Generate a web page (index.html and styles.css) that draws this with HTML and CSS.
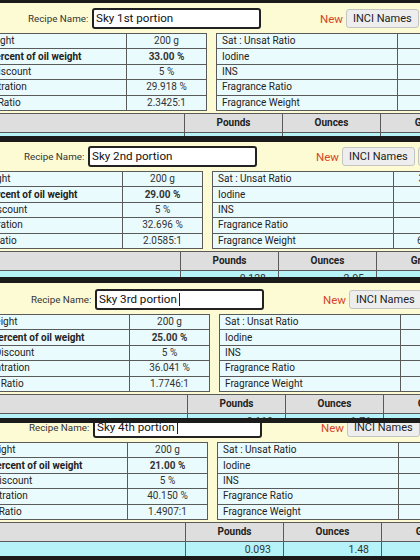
FILE: index.html
```html
<!DOCTYPE html>
<html lang="en">
<head>
  <meta charset="UTF-8">
  <meta name="viewport" content="width=device-width, initial-scale=1.0">
  <title>Soap Recipe Portions</title>
  <link rel="stylesheet" href="styles.css">
</head>
<body>

<!-- portion 1 -->
<div class="shot shot-1">
  <div class="sheet">
    <div class="recipe-bar">
      <span class="recipe-label">Recipe Name:</span>
      <div class="name-box">Sky 1st portion</div>
      <span class="new-link">New</span>
      <button class="bar-button">INCI Names</button>
      <button class="bar-button">Edit</button>
    </div>
    <div class="tables">
      <table class="grid grid-left">
        <tr><td>Total oil weight</td><td class="val">200 g</td></tr>
        <tr class="strong"><td>Water as Percent of oil weight</td><td class="val">33.00 %</td></tr>
        <tr><td>Super Fat Discount</td><td class="val">5 %</td></tr>
        <tr><td>Lye Concentration</td><td class="val">29.918 %</td></tr>
        <tr><td>Water : Lye Ratio</td><td class="val">2.3425:1</td></tr>
      </table>
      <table class="grid grid-right">
        <tr><td>Sat : Unsat Ratio</td><td class="val">35 : 65</td></tr>
        <tr><td>Iodine</td><td class="val">63</td></tr>
        <tr><td>INS</td><td class="val">141</td></tr>
        <tr><td>Fragrance Ratio</td><td class="val">3 %</td></tr>
        <tr><td>Fragrance Weight</td><td class="val">6.000 g</td></tr>
      </table>
    </div>
    <table class="amounts">
      <tr><th></th><th>Pounds</th><th>Ounces</th><th>Grams</th></tr>
      <tr><td></td><td>0.146</td><td>2.33</td><td>66.00</td></tr>
    </table>
  </div>
</div>

<!-- portion 2 -->
<div class="shot shot-2">
  <div class="sheet">
    <div class="recipe-bar">
      <span class="recipe-label">Recipe Name:</span>
      <div class="name-box">Sky 2nd portion</div>
      <span class="new-link">New</span>
      <button class="bar-button">INCI Names</button>
      <button class="bar-button">Edit</button>
    </div>
    <div class="tables">
      <table class="grid grid-left">
        <tr><td>Total oil weight</td><td class="val">200 g</td></tr>
        <tr class="strong"><td>Water as Percent of oil weight</td><td class="val">29.00 %</td></tr>
        <tr><td>Super Fat Discount</td><td class="val">5 %</td></tr>
        <tr><td>Lye Concentration</td><td class="val">32.696 %</td></tr>
        <tr><td>Water : Lye Ratio</td><td class="val">2.0585:1</td></tr>
      </table>
      <table class="grid grid-right">
        <tr><td>Sat : Unsat Ratio</td><td class="val">35 : 65</td></tr>
        <tr><td>Iodine</td><td class="val">63</td></tr>
        <tr><td>INS</td><td class="val">141</td></tr>
        <tr><td>Fragrance Ratio</td><td class="val">3 %</td></tr>
        <tr><td>Fragrance Weight</td><td class="val">6.000 g</td></tr>
      </table>
    </div>
    <table class="amounts">
      <tr><th></th><th>Pounds</th><th>Ounces</th><th>Grams</th></tr>
      <tr><td></td><td>0.128</td><td>2.05</td><td>58.00</td></tr>
    </table>
  </div>
</div>

<!-- portion 3 -->
<div class="shot shot-3">
  <div class="sheet">
    <div class="recipe-bar">
      <span class="recipe-label">Recipe Name:</span>
      <div class="name-box">Sky 3rd portion<span class="caret"></span></div>
      <span class="new-link">New</span>
      <button class="bar-button">INCI Names</button>
      <button class="bar-button">Edit</button>
    </div>
    <div class="tables">
      <table class="grid grid-left">
        <tr><td>Total oil weight</td><td class="val">200 g</td></tr>
        <tr class="strong"><td>Water as Percent of oil weight</td><td class="val">25.00 %</td></tr>
        <tr><td>Super Fat Discount</td><td class="val">5 %</td></tr>
        <tr><td>Lye Concentration</td><td class="val">36.041 %</td></tr>
        <tr><td>Water : Lye Ratio</td><td class="val">1.7746:1</td></tr>
      </table>
      <table class="grid grid-right">
        <tr><td>Sat : Unsat Ratio</td><td class="val">35 : 65</td></tr>
        <tr><td>Iodine</td><td class="val">63</td></tr>
        <tr><td>INS</td><td class="val">141</td></tr>
        <tr><td>Fragrance Ratio</td><td class="val">3 %</td></tr>
        <tr><td>Fragrance Weight</td><td class="val">6.000 g</td></tr>
      </table>
    </div>
    <table class="amounts">
      <tr><th></th><th>Pounds</th><th>Ounces</th><th>Grams</th></tr>
      <tr><td></td><td>0.110</td><td>1.76</td><td>50.00</td></tr>
    </table>
  </div>
</div>

<!-- portion 4 -->
<div class="shot shot-4">
  <div class="sheet">
    <div class="recipe-bar">
      <span class="recipe-label">Recipe Name:</span>
      <div class="name-box">Sky 4th portion<span class="caret"></span></div>
      <span class="new-link">New</span>
      <button class="bar-button">INCI Names</button>
      <button class="bar-button">Edit</button>
    </div>
    <div class="tables">
      <table class="grid grid-left">
        <tr><td>Total oil weight</td><td class="val">200 g</td></tr>
        <tr class="strong"><td>Water as Percent of oil weight</td><td class="val">21.00 %</td></tr>
        <tr><td>Super Fat Discount</td><td class="val">5 %</td></tr>
        <tr><td>Lye Concentration</td><td class="val">40.150 %</td></tr>
        <tr><td>Water : Lye Ratio</td><td class="val">1.4907:1</td></tr>
      </table>
      <table class="grid grid-right">
        <tr><td>Sat : Unsat Ratio</td><td class="val">35 : 65</td></tr>
        <tr><td>Iodine</td><td class="val">63</td></tr>
        <tr><td>INS</td><td class="val">141</td></tr>
        <tr><td>Fragrance Ratio</td><td class="val">3 %</td></tr>
        <tr><td>Fragrance Weight</td><td class="val">6.000 g</td></tr>
      </table>
    </div>
    <table class="amounts">
      <tr><th></th><th>Pounds</th><th>Ounces</th><th>Grams</th></tr>
      <tr><td></td><td>0.093</td><td>1.48</td><td>42.00</td></tr>
    </table>
  </div>
</div>

</body>
</html>
```

FILE: styles.css
```css
body {
  margin: 0;
  background-color: #1b1b1b;
  font-family: Roboto, "Noto Sans", sans-serif;
  color: #222;
}

/* one cropped screen per portion, dark band between them */
.shot {
  overflow: hidden;
  background-color: #fdfbd3;
  border-bottom: 5px solid #1b1b1b;
}

.shot-1 { height: 133px; border-top: 3px solid #1b1b1b; border-bottom-width: 6px; }
.shot-2 { height: 135px; border-bottom-width: 6px; }
.shot-3 { height: 135px; border-bottom-width: 5px; }
.shot-4 { height: 133px; border-bottom-width: 4px; }

/* the sheet is wider than the screen, scrolled a bit to the right */
.sheet {
  width: 560px;
  padding-top: 5px;
  margin-left: -60px;
}

.shot-2 .sheet { margin: -1px 0 0 -64px; }
.shot-3 .sheet { margin: 1px 0 0 -57px; }
.shot-4 .sheet { margin: -11px 0 0 -59px; }

/* recipe name row */
.recipe-bar {
  display: flex;
  align-items: center;
  height: 21px;
  padding-left: 88px;
}

.recipe-label {
  flex: none;
  width: 60px;
  font-size: 9.8px;
  color: #333;
  white-space: nowrap;
}

.name-box {
  flex: none;
  box-sizing: border-box;
  width: 169px;
  height: 21px;
  margin-left: 4px;
  padding: 0 2px;
  border: 2px solid #222;
  border-radius: 3px;
  background-color: #fff;
  font-size: 11.6px;
  line-height: 17px;
  color: #111;
  display: flex;
  align-items: center;
  white-space: nowrap;
}

.caret {
  width: 1px;
  height: 13px;
  margin-left: 2px;
  background-color: #222;
}

.new-link {
  flex: none;
  margin-left: 59px;
  font-size: 11.5px;
  color: #d5452a;
}

.bar-button {
  flex: none;
  height: 19px;
  margin-left: 3px;
  padding: 0 6px;
  font-family: Roboto, "Noto Sans", sans-serif;
  font-size: 11px;
  color: #222;
  background-color: #eeeeee;
  border: 1px solid #c4c4c4;
  border-radius: 3px;
  white-space: nowrap;
}

/* the two value tables */
.tables {
  display: flex;
  gap: 9px;
  margin-top: 4px;
}

.grid {
  border-collapse: collapse;
  font-size: 10px;
  background-color: #eafbfd;
}

.grid td {
  height: 14.4px;
  padding: 0 0 0 6px;
  border: 1px solid #5a5a5a;
  line-height: 14px;
  white-space: nowrap;
}

.grid-left td:first-child { width: 179px; }
.grid-right td:first-child { width: 175px; padding-left: 5px; }

.grid td.val {
  width: 79px;
  padding: 0;
  text-align: center;
  color: #333;
}

.grid .strong td { font-weight: bold; }

/* weight units */
.amounts {
  border-collapse: collapse;
  margin-top: 2px;
  font-size: 10px;
}

.amounts th {
  height: 18px;
  padding: 0;
  border: 1px solid #5a5a5a;
  background-color: #dedede;
  font-weight: bold;
  color: #222;
}

.amounts th:first-child { width: 243px; }
.amounts th + th { width: 97px; }

.amounts td {
  height: 15px;
  padding: 0 12px 0 0;
  border: 1px solid #5a5a5a;
  border-top: none;
  background-color: #b5f3f8;
  text-align: right;
  font-size: 10.5px;
  color: #333;
}
```
